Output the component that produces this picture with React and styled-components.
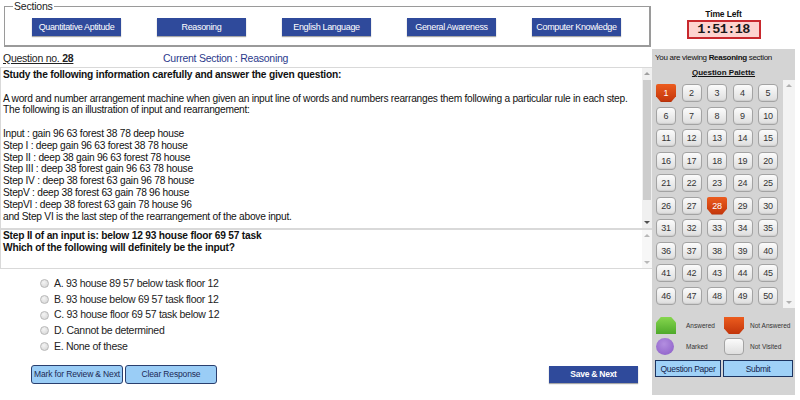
import React from "react";
import styled, { createGlobalStyle, css } from "styled-components";

const FONT = `"Liberation Sans", Arial, sans-serif`;

const Global = createGlobalStyle`
  html, body { margin: 0; padding: 0; background: #fff; }
  body { font-family: ${FONT}; color: #111; }
  * { box-sizing: border-box; }
`;

const Page = styled.div`
  display: flex;
  width: 800px;
  height: 400px;
  overflow: hidden;
`;

const Main = styled.div`
  width: 652px;
  display: flex;
  flex-direction: column;
`;

const Sections = styled.fieldset`
  margin: 0 1px 0 4px;
  padding: 6px 0 9px 0;
  border: 1px solid #9a9a9a;
  border-bottom-width: 2px;
  border-right-width: 2px;
  min-width: 0;
`;

const SectionRow = styled.div`
  display: flex;
  gap: 36px;
  padding-left: 27px;
`;

const Legend = styled.legend`
  font-size: 10.5px;
  line-height: 12px;
  padding: 0 1px;
  margin-left: 8px;
  color: #222;
  letter-spacing: -0.2px;
`;

const SectionButton = styled.div`
  width: 89px;
  height: 18px;
  background: #2f4a9b;
  color: #fff;
  font-size: 9px;
  letter-spacing: -0.35px;
  white-space: nowrap;
  display: flex;
  align-items: center;
  justify-content: center;
  box-shadow: 0 1px 1px rgba(0, 0, 0, 0.35);
`;

const HeaderRow = styled.div`
  height: 18px;
  display: flex;
  align-items: center;
  padding-left: 3px;
  font-size: 10.5px;
  letter-spacing: -0.25px;
  margin-top: 2px;
`;

const QNo = styled.div`
  width: 160px;
  text-decoration: underline;
  color: #222;
  b { font-weight: bold; }
`;

const CurrentSection = styled.div`
  color: #2b3a8c;
`;

const ScrollBox = styled.div`
  display: flex;
  height: ${(p) => p.$h}px;
  border: 1px solid #d9d9d9;
  border-right: none;
`;

const Passage = styled.div`
  flex: 1;
  padding: ${(p) => p.$pt}px 3px 0 2px;
  font-size: 10.2px;
  letter-spacing: -0.25px;
  line-height: ${(p) => p.$lh}px;
  color: #111;
  overflow: hidden;
`;

const Bold = styled.div`
  font-weight: bold;
  letter-spacing: -0.2px;
  white-space: nowrap;
`;

const Line = styled.div`
  min-height: ${(p) => (p.$blank ? "11.8px" : "0")};
  white-space: nowrap;
`;

const Track = styled.div`
  width: ${(p) => p.$w}px;
  background: ${(p) => p.$bg};
  display: flex;
  flex-direction: column;
  align-items: center;
  padding: 4px 0;
`;

const Arrow = styled.div`
  width: 0;
  height: 0;
  border-left: 3px solid transparent;
  border-right: 3px solid transparent;
  ${(p) =>
    p.$up
      ? css`border-bottom: 3px solid ${p.$c};`
      : css`border-top: 3px solid ${p.$c};`}
`;

const Thumb = styled.div`
  width: 8px;
  height: ${(p) => p.$h}px;
  background: #cdcdcd;
  margin-top: 5px;
`;

const Spacer = styled.div`
  flex: 1;
`;

const Options = styled.div`
  padding-left: 40px;
  margin-top: 7px;
  font-size: 10.5px;
  letter-spacing: -0.3px;
  line-height: 15.7px;
  color: #222;
`;

const Option = styled.label`
  display: flex;
  align-items: center;
  gap: 5px;
`;

const Radio = styled.span`
  width: 9px;
  height: 9px;
  border-radius: 50%;
  border: 1px solid #b8b8b8;
  background: radial-gradient(circle at 40% 35%, #f4f4f4, #d2d2d2);
`;

const Actions = styled.div`
  display: flex;
  align-items: center;
  padding-left: 31px;
  gap: 2px;
  margin-top: 10px;
`;

const LightButton = styled.div`
  width: 92px;
  height: 19px;
  background: #9acdf6;
  border: 1px solid #2a3f6e;
  border-radius: 3px;
  font-size: 8.5px;
  letter-spacing: -0.15px;
  white-space: nowrap;
  color: #1c2a55;
  display: flex;
  align-items: center;
  justify-content: center;
`;

const SaveButton = styled.div`
  margin-left: auto;
  margin-right: 14px;
  width: 89px;
  height: 17px;
  background: #2f4a9b;
  color: #fff;
  font-weight: bold;
  font-size: 8.5px;
  letter-spacing: -0.25px;
  display: flex;
  align-items: center;
  justify-content: center;
  box-shadow: 0 1px 1px rgba(0, 0, 0, 0.35);
`;

const Side = styled.div`
  width: 148px;
  display: flex;
  flex-direction: column;
`;

const TimerArea = styled.div`
  width: 143px;
  height: 49px;
  display: flex;
  flex-direction: column;
  align-items: center;
  padding-top: 8px;
`;

const TimerLabel = styled.div`
  font-weight: bold;
  font-size: 8.5px;
  letter-spacing: -0.15px;
  line-height: 12px;
  color: #111;
`;

const TimerBox = styled.div`
  width: 74px;
  height: 19px;
  background: #fdd3cf;
  border: 2px solid #c8282d;
  font-family: "Liberation Mono", "Courier New", monospace;
  font-weight: bold;
  font-size: 13.5px;
  letter-spacing: -0.6px;
  color: #1a1a1a;
  display: flex;
  align-items: center;
  justify-content: center;
`;

const Panel = styled.div`
  width: 143px;
  height: 346px;
  background: #d4d4d4;
  display: flex;
  flex-direction: column;
`;

const Viewing = styled.div`
  font-size: 8px;
  letter-spacing: -0.3px;
  line-height: 12px;
  padding: 3px 0 0 3px;
  white-space: nowrap;
  color: #111;
  b { font-weight: bold; }
`;

const PaletteTitle = styled.div`
  text-align: center;
  font-weight: bold;
  font-size: 8px;
  line-height: 12px;
  margin-top: 3px;
  text-decoration: underline;
  color: #111;
`;

const PaletteBox = styled.div`
  display: flex;
  height: 228px;
  margin-top: 1px;
`;

const Grid = styled.div`
  flex: 1;
  display: grid;
  grid-template-columns: repeat(5, 20px);
  grid-auto-rows: 18px;
  column-gap: 5.5px;
  row-gap: 4.5px;
  padding: 4px 0 0 4px;
`;

const notAnswered = css`
  background: linear-gradient(#ec5c1e, #c2350b);
  color: #fff;
  border: none;
  border-radius: 2px 2px 0 0;
  clip-path: polygon(0 0, 100% 0, 100% 68%, 76% 100%, 24% 100%, 0 68%);
`;

const PaletteButton = styled.div`
  font-size: 9px;
  letter-spacing: -0.2px;
  color: #333;
  display: flex;
  align-items: center;
  justify-content: center;
  border: 1px solid #a3a3a3;
  border-radius: 4px;
  background: linear-gradient(#fbfbfb, #dedede);
  box-shadow: inset 0 -1px 1px rgba(0, 0, 0, 0.08);
  ${(p) => p.$state === "na" && notAnswered}
`;

const LegendGrid = styled.div`
  display: grid;
  grid-template-columns: 68px 68px;
  grid-auto-rows: 17px;
  row-gap: 4px;
  padding-left: 4px;
  margin-top: 9px;
`;

const LegendItem = styled.div`
  display: flex;
  align-items: center;
  gap: ${(p) => p.$gap}px;
  font-size: 6.5px;
  white-space: nowrap;
  color: #333;
`;

const shapes = {
  answered: css`
    background: linear-gradient(#86d64e, #4ea92a);
    clip-path: polygon(24% 0, 76% 0, 100% 32%, 100% 100%, 0 100%, 0 32%);
  `,
  na: css`
    background: linear-gradient(#ec5c1e, #c2350b);
    clip-path: polygon(0 0, 100% 0, 100% 68%, 76% 100%, 24% 100%, 0 68%);
  `,
  marked: css`
    width: 18px;
    margin-right: 2px;
    border-radius: 50%;
    background: radial-gradient(circle at 45% 35%, #b38ee0, #8a5cc6);
  `,
  nv: css`
    border: 1px solid #a3a3a3;
    border-radius: 4px;
    background: linear-gradient(#fbfbfb, #dedede);
  `,
};

const Shape = styled.div`
  width: 20px;
  height: 17px;
  flex: none;
  ${(p) => shapes[p.$kind]}
`;

const PanelButtons = styled.div`
  display: flex;
  gap: 2px;
  padding-left: 3px;
  margin-top: 5px;
`;

const PanelButton = styled.div`
  width: ${(p) => p.$w}px;
  height: 17px;
  background: #9fd1f7;
  border: 1px solid #1c3461;
  font-size: 8.5px;
  letter-spacing: -0.3px;
  white-space: nowrap;
  color: #14244d;
  display: flex;
  align-items: center;
  justify-content: center;
`;

const sections = [
  "Quantitative Aptitude",
  "Reasoning",
  "English Language",
  "General Awareness",
  "Computer Knowledge",
];

const options = [
  "A. 93 house 89 57 below task floor 12",
  "B. 93 house below 69 57 task floor 12",
  "C. 93 house floor 69 57 task below 12",
  "D. Cannot be determined",
  "E. None of these",
];

const steps = [
  "Input : gain 96 63 forest 38 78 deep house",
  "Step I : deep gain 96 63 forest 38 78 house",
  "Step II : deep 38 gain 96 63 forest 78 house",
  "Step III : deep 38 forest gain 96 63 78 house",
  "Step IV : deep 38 forest 63 gain 96 78 house",
  "StepV : deep 38 forest 63 gain 78 96 house",
  "StepVI : deep 38 forest 63 gain 78 house 96",
  "and Step VI is the last step of the rearrangement of the above input.",
];

const legend = [
  { kind: "answered", label: "Answered", gap: 10 },
  { kind: "na", label: "Not Answered", gap: 6 },
  { kind: "marked", label: "Marked", gap: 10 },
  { kind: "nv", label: "Not Visited", gap: 6 },
];

export default function App() {
  const nums = Array.from({ length: 50 }, (_, i) => i + 1);
  return (
    <>
      <Global />
      <Page>
        <Main>
          <Sections>
            <Legend>Sections</Legend>
            <SectionRow>
              {sections.map((s) => (
                <SectionButton key={s}>{s}</SectionButton>
              ))}
            </SectionRow>
          </Sections>
          <HeaderRow>
            <QNo>
              Question no. <b>28</b>
            </QNo>
            <CurrentSection>Current Section : Reasoning</CurrentSection>
          </HeaderRow>
          <ScrollBox $h={162}>
            <Passage $pt={1} $lh={11.8}>
              <Bold>Study the following information carefully and answer the given question:</Bold>
              <Line $blank />
              <Line>
                A word and number arrangement machine when given an input line of words and numbers rearranges them following a particular rule in each step.
              </Line>
              <Line>The following is an illustration of input and rearrangement:</Line>
              <Line $blank />
              {steps.map((s) => (
                <Line key={s}>{s}</Line>
              ))}
            </Passage>
            <Track $w={10} $bg="#f0f0f0">
              <Arrow $up $c="#a0a0a0" />
              <Thumb $h={120} />
              <Spacer />
              <Arrow $c="#505050" />
            </Track>
          </ScrollBox>
          <ScrollBox $h={40}>
            <Passage $pt={0} $lh={12}>
              <Bold>Step II of an input is: below 12 93 house floor 69 57 task</Bold>
              <Bold>Which of the following will definitely be the input?</Bold>
            </Passage>
            <Track $w={10} $bg="#f7f7f7">
              <Arrow $up $c="#b8b8b8" />
              <Spacer />
              <Arrow $c="#b8b8b8" />
            </Track>
          </ScrollBox>
          <Options>
            {options.map((o) => (
              <Option key={o}>
                <Radio />
                {o}
              </Option>
            ))}
          </Options>
          <Actions>
            <LightButton>Mark for Review &amp; Next</LightButton>
            <LightButton>Clear Response</LightButton>
            <SaveButton>Save &amp; Next</SaveButton>
          </Actions>
        </Main>
        <Side>
          <TimerArea>
            <TimerLabel>Time Left</TimerLabel>
            <TimerBox>1:51:18</TimerBox>
          </TimerArea>
          <Panel>
            <Viewing>
              You are viewing <b>Reasoning</b> section
            </Viewing>
            <PaletteTitle>Question Palette</PaletteTitle>
            <PaletteBox>
              <Grid>
                {nums.map((n) => (
                  <PaletteButton key={n} $state={n === 1 || n === 28 ? "na" : "nv"}>
                    {n}
                  </PaletteButton>
                ))}
              </Grid>
              <Track $w={12} $bg="#f3f3f3">
                <Arrow $up $c="#b0b0b0" />
                <Spacer />
                <Arrow $c="#b0b0b0" />
              </Track>
            </PaletteBox>
            <LegendGrid>
              {legend.map((l) => (
                <LegendItem key={l.label} $gap={l.gap}>
                  <Shape $kind={l.kind} />
                  {l.label}
                </LegendItem>
              ))}
            </LegendGrid>
            <PanelButtons>
              <PanelButton $w={66}>Question Paper</PanelButton>
              <PanelButton $w={70}>Submit</PanelButton>
            </PanelButtons>
          </Panel>
        </Side>
      </Page>
    </>
  );
}
